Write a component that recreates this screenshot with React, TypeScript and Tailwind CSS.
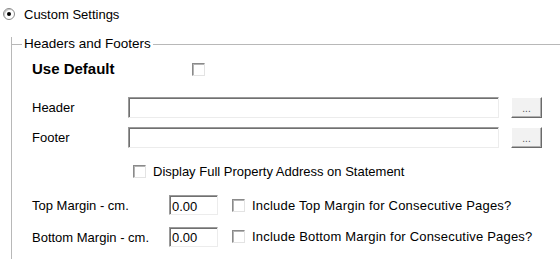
import React from 'react';

const FONT = { fontFamily: '"Liberation Sans", Arial, sans-serif' };

function Check() {
  return (
    <span className="inline-block w-[13px] h-[13px] shrink-0 bg-white border border-t-[#8a8a8a] border-l-[#8a8a8a] border-r-[#e3e3e3] border-b-[#e3e3e3] shadow-[inset_1px_1px_0_#b4b4b4]" />
  );
}

function TextBox({ className = '', value = '' }: { className?: string; value?: string }) {
  return (
    <div className={`bg-white border border-t-[#9a9a9a] border-l-[#9a9a9a] border-r-[#ececec] border-b-[#ececec] shadow-[inset_1px_1px_0_#707070] flex items-center pl-[2px] pt-[2px] ${className}`}>
      {value}
    </div>
  );
}

function DotsButton() {
  return (
    <button className="w-[31px] h-[21px] bg-[#f2f2f2] border border-t-white border-l-white border-r-[#6a6a6a] border-b-[#6a6a6a] shadow-[inset_-1px_-1px_0_#b0b0b0] flex items-end justify-center pb-[3px] text-[10px] leading-none text-[#555]">
      ...
    </button>
  );
}

export default function App() {
  return (
    <div className="w-[560px] h-[259px] bg-white text-black text-[13px] overflow-hidden" style={FONT}>
      {/* radio */}
      <div className="h-[28px] flex items-center pl-[3px]">
        <span className="w-[12px] h-[12px] rounded-full border border-[#8a8a8a] bg-white flex items-center justify-center shadow-[inset_1px_1px_0_#c8c8c8]">
          <span className="w-[4px] h-[4px] rounded-full bg-black" />
        </span>
        <span className="ml-[9px] pt-[1px]">Custom Settings</span>
      </div>

      {/* group box */}
      <div className="ml-[11px] mt-[16px] border-l border-[#b8b8b8] h-[300px]">
        <div className="-mt-[7px] h-[14px] flex items-center">
          <div className="w-[10px] border-t border-[#b8b8b8]" />
          <span className="px-[2px] text-[13.5px]">Headers and Footers</span>
          <div className="flex-1 border-t border-[#b8b8b8]" />
        </div>

        <div className="pl-[20px]">
          <div className="h-[36px] flex items-center">
            <span className="w-[160px] font-bold text-[15px]">Use Default</span>
            <Check />
          </div>

          <div className="mt-[10px] flex items-center">
            <span className="w-[96px] pt-[1px]">Header</span>
            <TextBox className="w-[371px] h-[21px]" />
            <div className="ml-[12px]"><DotsButton /></div>
          </div>

          <div className="mt-[9px] flex items-center">
            <span className="w-[96px] pt-[1px]">Footer</span>
            <TextBox className="w-[371px] h-[21px]" />
            <div className="ml-[12px]"><DotsButton /></div>
          </div>

          <div className="mt-[17px] h-[13px] flex items-center pl-[101px] gap-[7px]">
            <Check />
            <span>Display Full Property Address on Statement</span>
          </div>

          <div className="mt-[17px] flex items-center">
            <span className="w-[137px] pt-[1px]">Top Margin - cm.</span>
            <TextBox className="w-[49px] h-[20px]" value="0.00" />
            <div className="ml-[14px] flex items-center gap-[7px]">
              <Check />
              <span className="tracking-[0.2px]">Include Top Margin for Consecutive Pages?</span>
            </div>
          </div>

          <div className="mt-[11px] flex items-center">
            <span className="w-[137px] pt-[1px]">Bottom Margin - cm.</span>
            <TextBox className="w-[49px] h-[20px]" value="0.00" />
            <div className="ml-[14px] flex items-center gap-[7px]">
              <Check />
              <span className="tracking-[0.2px]">Include Bottom Margin for Consecutive Pages?</span>
            </div>
          </div>
        </div>
      </div>
    </div>
  );
}
